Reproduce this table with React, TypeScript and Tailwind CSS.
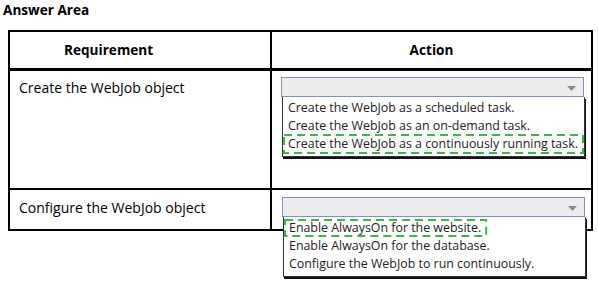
import React from "react";

const font = { fontFamily: '"Open Sans", "Noto Sans", sans-serif' };

function Arrow() {
  return (
    <svg width="9" height="5" viewBox="0 0 9 5" className="absolute right-[7px] top-[8px]">
      <polygon points="0,0 9,0 4.5,5" fill="#8a8a8a" />
    </svg>
  );
}

function Dashed() {
  return (
    <svg className="pointer-events-none absolute inset-0 h-full w-full overflow-visible" preserveAspectRatio="none">
      <rect x="1" y="1" width="calc(100% - 2px)" height="calc(100% - 2px)" fill="none" stroke="#43b548" strokeWidth="2" strokeDasharray="8 5" />
    </svg>
  );
}

function Dropdown({
  items,
  selected,
  full,
}: {
  items: string[];
  selected: number;
  full: boolean;
}) {
  return (
    <div className="relative h-[20px] w-[303px] border border-[#7f93b8] bg-[#ededf0]">
      <Arrow />
      <div className="absolute left-0 top-[19px] z-10 w-[303px] border border-t-0 border-[#333] bg-white pb-[3px] pt-[2px] shadow-[1px_2px_0_#111]">
        {items.map((t, i) => (
          <div key={t} className="relative h-[18px] whitespace-nowrap pl-[5px] text-[12.4px] leading-[18px] text-[#222]">
            {i === selected && full ? (
              <div className="pointer-events-none absolute -top-[1px] bottom-[-1px] left-0 right-0">
                <Dashed />
              </div>
            ) : null}
            {i === selected && !full ? (
              <span className="relative -ml-[5px] inline-block h-[18px] pl-[5px] pr-[6px]">
                <Dashed />
                {t}
              </span>
            ) : (
              t
            )}
          </div>
        ))}
      </div>
    </div>
  );
}

export default function App() {
  return (
    <div className="h-[283px] w-[598px] bg-white text-black" style={font}>
      <div className="h-[30px] pl-[3px] pt-[1px] text-[13.6px] font-bold leading-[18px]">Answer Area</div>
      <div className="ml-[8px] w-[585px] border-2 border-black">
        <div className="flex h-[39px] border-b-[3px] border-black">
          <div className="flex w-[262px] items-center border-r-2 border-black pl-[54px] text-[13.6px] font-bold">
            Requirement
          </div>
          <div className="flex flex-1 items-center justify-center text-[13.6px] font-bold">Action</div>
        </div>
        <div className="flex h-[119px] border-b-2 border-black">
          <div className="w-[262px] border-r-2 border-black pl-[9px] pt-[8px] text-[14px] leading-[18px]">
            Create the WebJob object
          </div>
          <div className="flex-1 pl-[9px] pt-[6px]">
            <Dropdown
              items={[
                "Create the WebJob as a scheduled task.",
                "Create the WebJob as an on-demand task.",
                "Create the WebJob as a continuously running task.",
              ]}
              selected={2}
              full={true}
            />
          </div>
        </div>
        <div className="flex h-[39px]">
          <div className="w-[262px] border-r-2 border-black pl-[9px] pt-[9px] text-[14px] leading-[18px]">
            Configure the WebJob object
          </div>
          <div className="flex-1 pl-[10px] pt-[7px]">
            <Dropdown
              items={[
                "Enable AlwaysOn for the website.",
                "Enable AlwaysOn for the database.",
                "Configure the WebJob to run continuously.",
              ]}
              selected={0}
              full={false}
            />
          </div>
        </div>
      </div>
    </div>
  );
}
